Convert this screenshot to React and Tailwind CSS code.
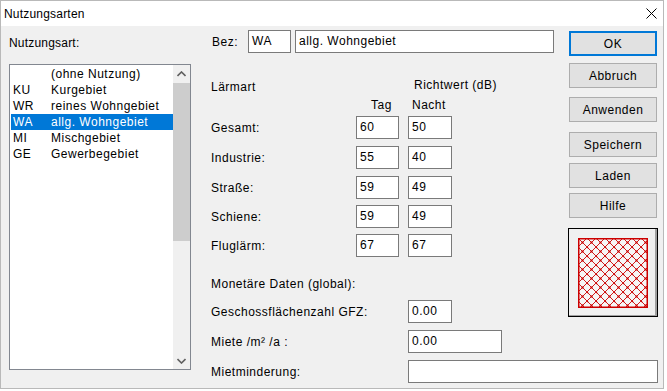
import React from "react";

const items = [
  { code: "", name: "(ohne Nutzung)" },
  { code: "KU", name: "Kurgebiet" },
  { code: "WR", name: "reines Wohngebiet" },
  { code: "WA", name: "allg. Wohngebiet", selected: true },
  { code: "MI", name: "Mischgebiet" },
  { code: "GE", name: "Gewerbegebiet" },
];

const rows = [
  { label: "Gesamt:", tag: "60", nacht: "50", mt: "mt-[4px]" },
  { label: "Industrie:", tag: "55", nacht: "40", mt: "mt-[7px]" },
  { label: "Straße:", tag: "59", nacht: "49", mt: "mt-[7px]" },
  { label: "Schiene:", tag: "59", nacht: "49", mt: "mt-[6px]" },
  { label: "Fluglärm:", tag: "67", nacht: "67", mt: "mt-[6px]" },
];

const buttons = [
  { label: "Abbruch", mt: "mt-[7px]" },
  { label: "Anwenden", mt: "mt-[9px]" },
  { label: "Speichern", mt: "mt-[10px]" },
  { label: "Laden", mt: "mt-[6px]" },
  { label: "Hilfe", mt: "mt-[5px]" },
];

const Field = ({ value, className = "" }) => (
  <div
    className={`h-[23px] border border-[#7a7a7a] bg-white pl-[3px] pt-[3px] leading-[14px] ${className}`}
  >
    {value}
  </div>
);

const Chevron = ({ up }) => (
  <svg width="9" height="6" viewBox="0 0 9 6">
    <polyline
      points={up ? "0.5,5 4.5,1 8.5,5" : "0.5,1 4.5,5 8.5,1"}
      fill="none"
      stroke="#606060"
      strokeWidth="1.6"
    />
  </svg>
);

const App = () => {
  return (
    <div className="w-[667px] h-[391px] bg-white font-['Liberation_Sans',Arial,sans-serif] text-[12px] leading-[14px] text-black tracking-[0.5px]">
      <div className="w-[664px] h-[389px] border border-[#b9b9b9] bg-[#f0f0f0] flex flex-col">
        {/* Title bar */}
        <div className="h-[25px] bg-white flex items-center justify-between pl-[3px] pr-[6px]">
          <span className="tracking-[0.2px]">Nutzungsarten</span>
          <svg width="11" height="11" viewBox="0 0 11 11">
            <path d="M0.5 0.5 L10.5 10.5 M10.5 0.5 L0.5 10.5" stroke="#000" strokeWidth="1" />
          </svg>
        </div>

        {/* Body */}
        <div className="flex flex-1">
          {/* Left column */}
          <div className="ml-[8px] w-[182px] flex flex-col">
            <div className="mt-[10px] tracking-[0.2px]">Nutzungsart:</div>
            <div className="mt-[14px] h-[306px] border border-[#828790] bg-white flex">
              <div className="flex-1 pl-[1px] pt-[1px]">
                {items.map((it) => (
                  <div
                    key={it.name}
                    className={`h-[16px] flex items-center pl-[2px] ${
                      it.selected ? "bg-[#0078d7] text-white" : ""
                    }`}
                  >
                    <span className="w-[38px]">{it.code}</span>
                    <span>{it.name}</span>
                  </div>
                ))}
              </div>
              <div className="w-[17px] bg-[#f0f0f0] flex flex-col">
                <div className="h-[17px] flex items-center justify-center">
                  <Chevron up />
                </div>
                <div className="mt-[1px] h-[158px] bg-[#cdcdcd]" />
                <div className="flex-1" />
                <div className="h-[17px] flex items-center justify-center">
                  <Chevron />
                </div>
              </div>
            </div>
          </div>

          {/* Right area */}
          <div className="ml-[20px] flex flex-col">
            <div className="flex items-start">
              {/* Form */}
              <div className="w-[357px] pt-[4px] flex flex-col">
                <div className="flex items-center">
                  <span className="w-[37px] pl-[1px]">Bez:</span>
                  <Field value="WA" className="w-[43px]" />
                  <Field value="allg. Wohngebiet" className="ml-[4px] w-[259px]" />
                </div>

                <div className="mt-[25px] flex">
                  <span className="w-[203px] pt-[2px]">Lärmart</span>
                  <span>Richtwert (dB)</span>
                </div>
                <div className="mt-[4px] flex">
                  <span className="ml-[160px] w-[41px]">Tag</span>
                  <span>Nacht</span>
                </div>

                {rows.map((r) => (
                  <div key={r.label} className={`${r.mt} flex items-center`}>
                    <span className="w-[145px]">{r.label}</span>
                    <Field value={r.tag} className="w-[43px]" />
                    <Field value={r.nacht} className="ml-[9px] w-[44px]" />
                  </div>
                ))}

                <div className="mt-[20px]">Monetäre Daten (global):</div>
                <div className="mt-[9px] flex items-center">
                  <span className="w-[197px]">Geschossflächenzahl GFZ:</span>
                  <Field value="0.00" className="w-[44px]" />
                </div>
              </div>

              {/* Buttons */}
              <div className="pt-[5px] flex flex-col">
                <button className="ml-[1px] w-[88px] h-[25px] border-2 border-[#0078d7] bg-[#e1e1e1]">
                  OK
                </button>
                {buttons.map((b) => (
                  <button
                    key={b.label}
                    className={`${b.mt} ml-[1px] w-[88px] h-[25px] border border-[#adadad] bg-[#e1e1e1]`}
                  >
                    {b.label}
                  </button>
                ))}
                <div className="mt-[10px] w-[90px] h-[89px] border border-black shadow-[inset_-2px_-1px_0_#a0a0a0] pl-[9px] pt-[9px]">
                  <svg width="70" height="70" viewBox="0 0 70 70">
                    <defs>
                      <pattern id="hatch" width="9" height="9" patternUnits="userSpaceOnUse">
                        <path d="M0 0 L9 9 M9 0 L0 9" stroke="#cc0000" strokeWidth="0.9" />
                        <rect x="3.5" y="3.5" width="2" height="2" fill="#cc0000" />
                        <rect x="0" y="0" width="1.2" height="1.2" fill="#cc0000" />
                      </pattern>
                    </defs>
                    <rect x="0" y="0" width="70" height="70" fill="#f6f6f6" />
                    <rect x="0" y="0" width="70" height="70" fill="url(#hatch)" />
                    <rect x="0.75" y="0.75" width="68.5" height="68.5" fill="none" stroke="#cc0000" strokeWidth="1.5" />
                  </svg>
                </div>
              </div>
            </div>

            <div className="mt-[7px] flex items-center">
              <span className="w-[197px]">Miete /m² /a :</span>
              <Field value="0.00" className="w-[94px]" />
            </div>
            <div className="mt-[7px] flex items-center">
              <span className="w-[197px]">Mietminderung:</span>
              <Field value="" className="w-[250px]" />
            </div>
          </div>
        </div>
      </div>
    </div>
  );
};

export default App;
